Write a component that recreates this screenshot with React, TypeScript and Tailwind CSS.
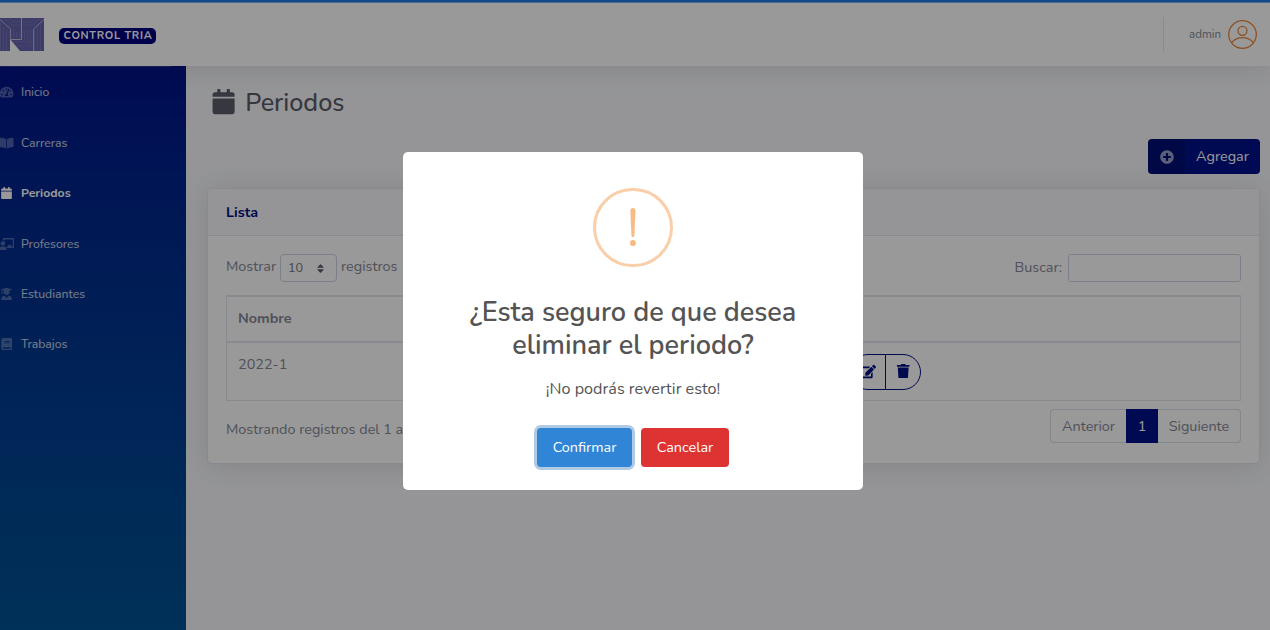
import React from 'react';
import { FaTachometerAlt, FaBookOpen, FaChalkboardTeacher, FaUserGraduate, FaBook, FaCalendar, FaPlusCircle, FaEdit, FaTrash, FaSort } from 'react-icons/fa';

function Logo() {
  return (
    <svg width="44" height="33" viewBox="0 0 44 33" className="shrink-0">
      <rect width="44" height="33" fill="#6765ad" />
      <path d="M0.5 5V33M3.5 9V33M6.5 12V33M34.5 12V33M37.5 9V33M40.5 6V33M13.5 11V20M16.5 14V20M19.5 14V20M24.5 12V21M27.5 12V23M30.5 13V28M5 0L12 7H20M9 0L14 4H21M40 0L33 7H23M36 0L31 4H23M13 24H30M17 28H32" fill="none" stroke="#7674b7" strokeWidth="1" />
      <path d="M0 1.5L10.5 11V21M44 1.5L33.5 11V33" fill="none" stroke="#b4b3d8" strokeWidth="1" />
      <path d="M21.5 0V21.5H10.5" fill="none" stroke="#c4c4de" strokeWidth="1" />
      <path d="M10 21L20 33H10Z" fill="#fff" />
    </svg>
  );
}

const nav = [
  { label: 'Inicio', icon: FaTachometerAlt, height: 'h-[51px] pt-px' },
  { label: 'Carreras', icon: FaBookOpen, height: 'h-[51px] pt-px' },
  { label: 'Periodos', icon: FaCalendar, height: 'h-[50px]', active: true },
  { label: 'Profesores', icon: FaChalkboardTeacher, height: 'h-[51px] pt-px' },
  { label: 'Estudiantes', icon: FaUserGraduate, height: 'h-[50px]' },
  { label: 'Trabajos', icon: FaBook, height: 'h-[50px]' },
];

function Sidebar() {
  return (
    <aside className="w-[186px] shrink-0 bg-linear-to-b from-[#00118a] to-[#005294]">
      <div className="h-px w-[171px] bg-white/15" />
      <nav className="-mt-px">
        {nav.map(({ label, icon: Icon, height, active }) => (
          <a key={label} className={`flex items-center text-[12.24px] ${height} ${active ? 'font-bold text-white' : 'text-white/80'}`}>
            <span className="-ml-px flex w-[22px]"><Icon className={active ? 'h-[12.24px] w-[15px] text-white' : 'h-[12.24px] w-[15.3px] text-white/30'} /></span>
            <span>{label}</span>
          </a>
        ))}
      </nav>
    </aside>
  );
}

function Topbar() {
  return (
    <header className="relative z-10 h-[66px] bg-white shadow-[0_2px_28px_rgba(58,59,69,0.15)]">
      <div className="h-[3px] border-b border-[#7fb2f0] bg-[#1f7ae8]" />
      <div className="flex h-[63px] items-center pr-[13px]">
        <Logo />
        <span className="mt-[3px] ml-[15px] flex h-4 w-[97px] items-center justify-center rounded-[5px] bg-[#000080] pl-px text-[10.8px] font-bold tracking-[0.7px] text-white">CONTROL TRIA</span>
        <div className="mr-[25px] ml-auto h-[35px] w-px bg-[#e3e6f0]" />
        <span className="mr-[7px] text-[11.52px] text-[#858796]">admin</span>
        <svg width="29" height="29" viewBox="0 0 29 29" fill="none" stroke="#e9883f" strokeWidth="1.3">
          <circle cx="14.5" cy="14.5" r="13.8" />
          <circle cx="14.5" cy="10.8" r="4.5" />
          <path d="M3.4 22.7C6.5 19.2 10.3 17.7 14.5 17.7s8 1.5 11.1 5" />
        </svg>
      </div>
    </header>
  );
}

function Card() {
  return (
    <section className="mt-[14px] ml-[-4px] h-[276px] w-[1053px] rounded-[5px] border border-[#e3e6f0] bg-white text-[14.4px] text-[#858796] shadow-[0_2px_28px_rgba(58,59,69,0.15)]">
      <div className="flex h-[47px] items-center rounded-t border-b border-[#e3e6f0] bg-[#f8f9fc] pt-px pl-[18px] font-bold text-[#000f82]">Lista</div>
      <div className="px-[18px] pt-[18px]">
        <div className="flex h-7 items-center">
          <span className="-mt-0.5">Mostrar</span>
          <span className="mx-1 flex h-7 w-[57px] items-center justify-between rounded border border-[#d1d3e2] pt-px pr-[10px] pl-[7px] text-[12.6px] text-[#6e707e]">10<FaSort className="h-[11px] w-[11px] text-[#5a5c69]" /></span>
          <span className="-mt-0.5">registros</span>
          <span className="mr-1.5 ml-auto">Buscar:</span>
          <span className="h-7 w-[173px] rounded-[3px] border border-[#d1d3e2]" />
        </div>
        <div className="mt-[13px] h-[106px] border border-t-2 border-[#e3e6f0]">
          <div className="flex h-[46px] items-center border-b-2 border-[#e3e6f0] pl-[11px] font-bold">Nombre</div>
          <div className="flex h-[57px] pt-[11px] pl-[11px]">
            <span className="w-[612px] leading-5">2022-1</span>
            <div className="flex h-9 w-[71px] rounded-full border border-[#000f82] text-[#000f82]">
              <span className="flex w-[35px] items-center justify-center border-r border-[#000f82] pb-[2px]"><FaEdit className="h-[15px] w-[15px]" /></span>
              <span className="flex w-[34px] items-center justify-center pb-[2px]"><FaTrash className="h-[14.4px] w-[14.4px]" /></span>
            </div>
          </div>
        </div>
        <div className="mt-2 flex justify-between">
          <span className="pt-[10px]">Mostrando registros del 1 al 1 de un total de 1 registros</span>
          <div className="flex h-[34px] w-[191px]">
            <span className="flex w-[76px] items-center justify-center rounded-l border border-r-0 border-[#dddfeb] pt-px">Anterior</span>
            <span className="flex w-8 items-center justify-center bg-[#00128b] pt-px text-white">1</span>
            <span className="flex flex-1 items-center justify-center rounded-r border border-l-0 border-[#dddfeb] pt-px">Siguiente</span>
          </div>
        </div>
      </div>
    </section>
  );
}

function ConfirmDialog() {
  return (
    <div className="absolute inset-0 z-20 bg-black/40">
      <div role="dialog" className="mt-[152px] ml-[403px] flex h-[338px] w-[460px] flex-col items-center rounded-[5px] bg-white pt-9 text-[#545454]">
        <div className="flex h-[79px] w-20 items-center justify-center rounded-full border-[3px] border-[#facea8] text-[54px] leading-none text-[#f8bb86]">!</div>
        <h2 className="mt-[29px] text-center text-[27px] leading-[33px] font-semibold">¿Esta seguro de que desea<br />eliminar el periodo?</h2>
        <p className="mt-[15px] text-[16.2px] leading-6">¡No podrás revertir esto!</p>
        <div className="mt-[27px] flex gap-[9px] text-[14.4px] text-white">
          <button className="h-[39px] w-[95px] rounded bg-[#3085d6] shadow-[0_0_0_3px_rgba(100,150,200,0.5)]">Confirmar</button>
          <button className="h-[39px] w-[88px] rounded bg-[#dd3333]">Cancelar</button>
        </div>
      </div>
    </div>
  );
}

export default function App() {
  return (
    <div className="relative flex h-[630px] w-[1270px] flex-col overflow-hidden bg-[#f8f9fc] font-['Nunito','Lato',sans-serif]">
      <Topbar />
      <div className="flex flex-1">
        <Sidebar />
        <main className="flex-1 pt-[18px] pr-[10px] pl-[25px]">
          <h1 className="flex h-9 items-center text-[25.2px] font-medium text-[#5a5c69]"><FaCalendar className="mr-[9px]" /><span className="mt-[3px]">Periodos</span></h1>
          <button className="mt-[19px] ml-auto flex h-[35px] w-[112px] items-center rounded bg-[#00128b] text-[14.4px] text-white">
            <span className="flex h-full w-[37px] items-center justify-center rounded-l bg-black/15"><FaPlusCircle className="h-[14px] w-[14px] text-white/60" /></span>
            <span className="flex-1 text-center">Agregar</span>
          </button>
          <Card />
        </main>
      </div>
      <ConfirmDialog />
    </div>
  );
}
